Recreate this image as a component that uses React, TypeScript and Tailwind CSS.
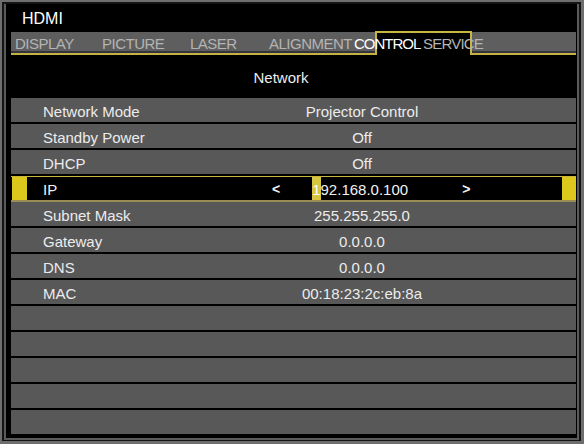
import React from "react";

const rows: { label: string; value: string }[] = [
  { label: "Network Mode", value: "Projector Control" },
  { label: "Standby Power", value: "Off" },
  { label: "DHCP", value: "Off" },
];
const rowsAfter: { label: string; value: string }[] = [
  { label: "Subnet Mask", value: "255.255.255.0" },
  { label: "Gateway", value: "0.0.0.0" },
  { label: "DNS", value: "0.0.0.0" },
  { label: "MAC", value: "00:18:23:2c:eb:8a" },
];

function Row({ label, value }: { label: string; value: string }) {
  return (
    <div className="flex h-[26px] border-b-2 border-black bg-[#585858] text-[15px] leading-[17px] text-[#ececec]">
      <div className="w-[236px] pl-[32px] pt-[2px] flex items-center">{label}</div>
      <div className="w-[230px] pt-[2px] flex items-center justify-center">{value}</div>
      <div className="flex-1" />
    </div>
  );
}

function TabSegment({ className }: { className: string }) {
  return (
    <div className={`flex flex-col ${className}`}>
      <div className="h-[1px] bg-black" />
      <div className="h-[19px] bg-[#5e5e5e]" />
      <div className="h-[2px] bg-[#34343e]" />
      <div className="h-[2px] bg-[#c4b242]" />
      <div className="h-[1px] bg-black" />
    </div>
  );
}

export default function App() {
  return (
    <div
      className="w-[584px] h-[444px] bg-[#6e6e6e] pt-[2px] pl-[2px] pr-[3px] pb-[3px]"
      style={{ fontFamily: "'Liberation Sans', Arial, sans-serif" }}
    >
      <div className="h-full bg-[#141414] pt-[2px] pl-[2px] pr-[2px] pb-[1px]">
        <div className="h-full bg-[#5a5a5a] pl-[2px] pr-[2px] pb-[2px]">
          <div className="h-full bg-black pl-[5px] pr-[1px] pb-[2px] flex flex-col">
            {/* Source header */}
            <div className="h-[27px] pt-[6px] pl-[11px] text-[16px] leading-[18px] text-white">HDMI</div>

            {/* Tab bar */}
            <div className="relative h-[25px] flex">
              <TabSegment className="w-[364px]" />
              <div className="w-[97px] h-[24px] bg-black border-t-2 border-x-2 border-[#c8b440]" />
              <TabSegment className="flex-1" />
              <div className="absolute inset-0 flex pl-[4px] pt-[4px] text-[15px] leading-[17px] tracking-[-0.5px] text-[#b4b4b4]">
                <span className="w-[87px]">DISPLAY</span>
                <span className="w-[88px]">PICTURE</span>
                <span className="w-[79px]">LASER</span>
                <span className="w-[85px]">ALIGNMENT</span>
                <span className="w-[69px] tracking-[-1px] text-white">CONTROL</span>
                <span className="tracking-[-0.8px]">SERVICE</span>
              </div>
            </div>

            {/* Page title */}
            <div className="h-[42px] pt-[13px] pr-[25px] text-center text-[15px] leading-[17px] text-[#ececec]">
              Network
            </div>

            {/* Rows */}
            <div className="flex flex-col">
              {rows.map((r) => (
                <Row key={r.label} label={r.label} value={r.value} />
              ))}

              {/* Selected IP row */}
              <div className="flex h-[26px] bg-black border-t border-b-2 border-t-[#c9b63c] border-b-[#9a8c55] text-[15px] leading-[17px] text-[#f2f2f2]">
                <div className="w-[15px] ml-[1px] bg-[#dcc81c]" />
                <div className="w-[220px] pl-[16px] pt-[1px] flex items-center">IP</div>
                <div className="ml-[25px] pt-[1px] flex items-center font-bold text-[14px]">&lt;</div>
                <div className="ml-[32px] flex items-center pt-[1px] bg-[#d6c640] text-white">1</div>
                <div className="flex items-center pt-[1px]">92.168.0.100</div>
                <div className="ml-[54px] pt-[1px] flex items-center font-bold text-[14px]">&gt;</div>
                <div className="ml-auto w-[14px] bg-[#dcc81c]" />
              </div>

              {rowsAfter.map((r) => (
                <Row key={r.label} label={r.label} value={r.value} />
              ))}
              {[0, 1, 2, 3, 4].map((i) => (
                <Row key={`e${i}`} label="" value="" />
              ))}
            </div>
          </div>
        </div>
      </div>
    </div>
  );
}
